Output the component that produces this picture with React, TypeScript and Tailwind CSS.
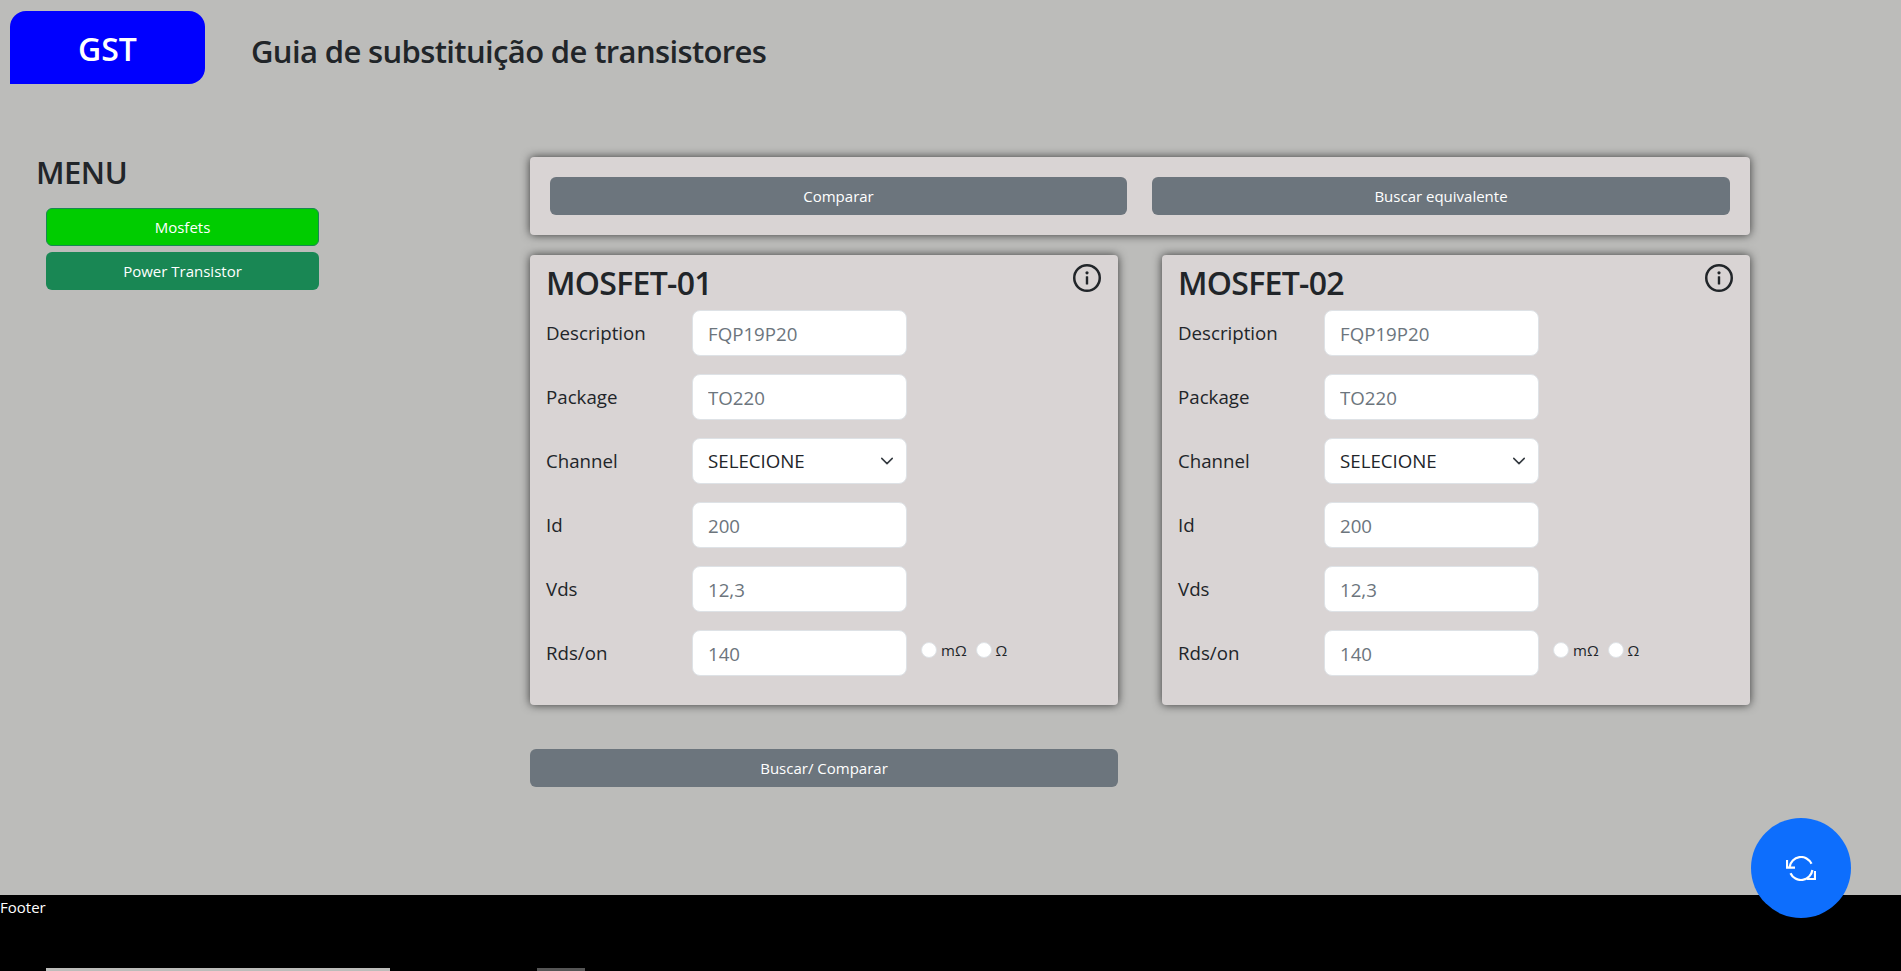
const font = { fontFamily: '"Open Sans", sans-serif' };

function SyncIcon() {
  return (
    <svg className="w-[30px] h-[25px]" viewBox="0 0 30 25" fill="none" stroke="currentColor" strokeWidth={2.2}>
      <path d="M3.6 11A11.5 11.5 0 0 1 25.5 7.8" />
      <path d="M1 4v7.7h8" />
      <path d="M26.4 14A11.5 11.5 0 0 1 4.5 17.2" />
      <path d="M29 15v8h-8" />
    </svg>
  );
}

function InfoIcon() {
  return (
    <svg className="absolute top-[9px] right-[17px] w-[28px] h-[28px] text-[#212529]" viewBox="0 0 28 28" fill="currentColor">
      <circle cx="14" cy="14" r="12.75" fill="none" stroke="currentColor" strokeWidth={2.5} />
      <circle cx="14" cy="8.8" r="1.6" />
      <rect x="12.8" y="12.2" width="2.4" height="8.3" rx="0.6" />
    </svg>
  );
}

function Field({ label, value, children }: { label: string; value: string; children?: React.ReactNode }) {
  return (
    <div className="flex items-center h-[46px]">
      <label className="w-[146px] text-[18.7px] text-[#212529]">{label}</label>
      <input
        readOnly
        placeholder={value}
        className="w-[215px] h-[46px] bg-white rounded-lg px-[15px] text-[18.7px] outline-none placeholder:text-[#6c757d] border border-[#dee2e6]"
      />
      {children}
    </div>
  );
}

function Card({ title }: { title: string }) {
  return (
    <div className="relative w-[588px] h-[450px] bg-[#d9d4d4] rounded shadow-[0_0_10px_rgba(0,0,0,0.7)] pl-4 pt-[4px]">
      <h2 className="text-[32px] font-semibold tracking-[-0.7px] text-[#212529] leading-[48px] mb-[3px]">{title}</h2>
      <InfoIcon />
      <div className="flex flex-col gap-[18px]">
        <Field label="Description" value="FQP19P20" />
        <Field label="Package" value="TO220" />
        <div className="flex items-center h-[46px]">
          <label className="w-[146px] text-[18.7px] text-[#212529]">Channel</label>
          <div className="relative w-[215px] h-[46px] bg-white rounded-lg border border-[#dee2e6] flex items-center px-[15px] text-[18.7px] text-[#212529]">
            SELECIONE
            <svg className="absolute right-[12px] top-[15px] w-[14px] h-[14px]" viewBox="0 0 16 16" fill="none" stroke="#343a40" strokeWidth={1.75} strokeLinecap="round" strokeLinejoin="round">
              <path d="M2 5l6 6 6-6" />
            </svg>
          </div>
        </div>
        <Field label="Id" value="200" />
        <Field label="Vds" value="12,3" />
        <Field label="Rds/on" value="140">
          <div className="flex items-center self-start mt-[9px] ml-[14px] text-[15px] text-[#212529]">
            <span className="w-[16px] h-[16px] rounded-full bg-white border border-[#dee2e6]" />
            <span className="ml-[4px]">mΩ</span>
            <span className="ml-[9px] w-[16px] h-[16px] rounded-full bg-white border border-[#dee2e6]" />
            <span className="ml-[4px]">Ω</span>
          </div>
        </Field>
      </div>
    </div>
  );
}

export default function App() {
  return (
    <div className="relative h-[971px] bg-[#bcbcba] flex flex-col overflow-hidden" style={font}>
      <header className="flex items-center pl-[10px] pt-[11px]">
        <div className="w-[195px] h-[73px] pt-[3px] bg-[#0000ff] rounded-t-2xl rounded-br-2xl text-white text-[32px] font-semibold flex items-center justify-center">
          GST
        </div>
        <h1 className="ml-[46px] pt-[7px] text-[31px] font-semibold tracking-[-0.63px] text-[#212529]">Guia de substituição de transistores</h1>
      </header>

      <div className="flex flex-1">
        <aside className="w-[530px] pl-[36px] pt-[64px]">
          <h2 className="text-[31px] font-semibold tracking-[-0.5px] text-[#212529] leading-[48px] mb-[12px]">MENU</h2>
          <div className="flex flex-col gap-[6px] ml-[10px] w-[273px]">
            <button className="h-[38px] rounded-md bg-[#00cc00] border border-[#198754] text-white text-[15px]">Mosfets</button>
            <button className="h-[38px] rounded-md bg-[#198754] text-white text-[15px]">Power Transistor</button>
          </div>
        </aside>

        <main className="w-[1220px] pt-[73px]">
          <div className="h-[78px] bg-[#d9d4d4] rounded shadow-[0_0_10px_rgba(0,0,0,0.7)] flex items-center gap-[25px] px-[20px]">
            <button className="w-[577px] h-[38px] rounded-md bg-[#6c757d] text-white text-[15px]">Comparar</button>
            <button className="flex-1 h-[38px] rounded-md bg-[#6c757d] text-white text-[15px]">Buscar equivalente</button>
          </div>
          <div className="flex justify-between mt-[20px]">
            <Card title="MOSFET-01" />
            <Card title="MOSFET-02" />
          </div>
          <button className="mt-[44px] w-[588px] h-[38px] rounded-md bg-[#6c757d] text-white text-[15px]">Buscar/ Comparar</button>
        </main>
      </div>

      <footer className="h-[76px] bg-black text-white text-[15px] leading-[24px]">
        Footer
        <div className="mt-[49px] h-[3px] flex">
          <div className="w-[344px] ml-[46px] bg-[#bcbcba]" />
          <div className="w-[48px] ml-[147px] bg-[#555555]" />
        </div>
      </footer>

      <button className="absolute left-[1751px] top-[818px] w-[100px] h-[100px] rounded-full bg-[#0d6efd] text-white flex items-center justify-center">
        <SyncIcon />
      </button>
    </div>
  );
}
